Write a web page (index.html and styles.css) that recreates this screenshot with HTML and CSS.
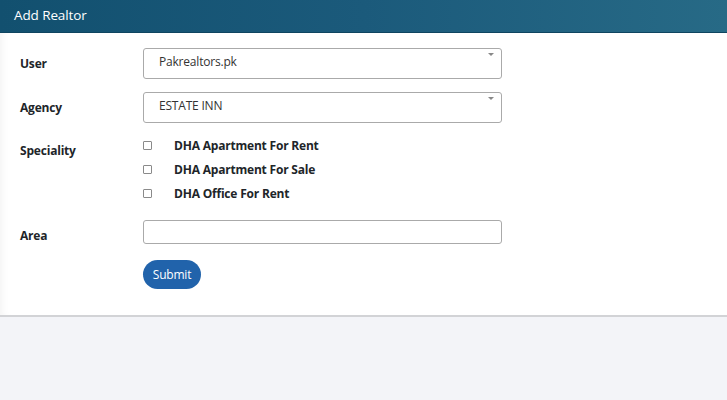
FILE: index.html
```html
<!DOCTYPE html>
<html>
<head>
<meta charset="utf-8">
<link rel="stylesheet" href="styles.css">
</head>
<body>
<div class="header">Add Realtor</div>
<div class="card">
  <form class="form">
    <div class="row row-select">
      <label class="label">User</label>
      <div class="select"><span>Pakrealtors.pk</span><span class="arrow"></span></div>
    </div>
    <div class="row row-select">
      <label class="label">Agency</label>
      <div class="select"><span>ESTATE INN</span><span class="arrow"></span></div>
    </div>
    <div class="row row-check">
      <label class="label label-check">Speciality</label>
      <div class="checks">
        <div class="check"><span class="box"></span><span>DHA Apartment For Rent</span></div>
        <div class="check"><span class="box"></span><span>DHA Apartment For Sale</span></div>
        <div class="check"><span class="box"></span><span>DHA Office For Rent</span></div>
      </div>
    </div>
    <div class="row row-area">
      <label class="label label-area">Area</label>
      <div class="input"></div>
    </div>
    <div class="row row-submit">
      <span></span>
      <div><button type="button" class="btn">Submit</button></div>
    </div>
  </form>
</div>
</body>
</html>
```
FILE: styles.css
```css
* { box-sizing: border-box; }
html, body { margin: 0; padding: 0; }
body {
  background: #f3f4f8;
  font-family: "Open Sans", "Noto Sans", sans-serif;
  color: #212529;
  width: 727px;
  height: 400px;
  overflow: hidden;
}
.header {
  height: 33px;
  background: linear-gradient(90deg, #12506f 0%, #1b5a7b 50%, #276a86 100%);
  border-bottom: 1px solid #0f4560;
  color: #fff;
  font-size: 13.5px;
  padding: 6px 14px 0;
  letter-spacing: -0.1px;
}
.card {
  background: #fff;
  height: 284px;
  border-bottom: 2px solid #d2d3d6;
  box-shadow: inset 8px 0 8px -6px rgba(0,0,0,0.05);
  padding: 15px 20px 0;
}
.form { display: flex; flex-direction: column; }
.row {
  display: grid;
  grid-template-columns: 123px 359px;
  align-items: center;
}
.label {
  font-weight: 700;
  font-size: 12px;
  letter-spacing: -0.2px;
}
.row-select { height: 31px; margin-bottom: 13px; }
.select {
  height: 31px;
  border: 1px solid #aaa;
  border-radius: 3px;
  display: flex;
  align-items: center;
  justify-content: space-between;
  padding: 0 7px 4px 15px;
  font-size: 12px;
  color: #333;
  letter-spacing: -0.2px;
  align-self: stretch;
}
.arrow {
  width: 0; height: 0;
  border-left: 3px solid transparent;
  border-right: 3px solid transparent;
  border-top: 3px solid #888;
  margin-bottom: 14px;
}
.row-check { align-items: start; margin-top: 0; }
.label-check { padding-top: 6px; }
.checks { display: flex; flex-direction: column; gap: 6px; }
.check {
  display: flex;
  align-items: center;
  height: 18px;
  font-weight: 700;
  font-size: 12px;
  letter-spacing: -0.2px;
}
.box {
  width: 9px; height: 9px;
  border: 1px solid #8a8a8a;
  border-radius: 1px;
  margin-right: 22px;
}
.row-area { margin-top: 18px; height: 24px; }
.label-area { padding-top: 6px; }
.input {
  height: 24px;
  border: 1px solid #aaa;
  border-radius: 3px;
}
.row-submit { margin-top: 16px; }
.btn {
  background: #2163ab;
  color: #fff;
  border: none;
  border-radius: 15px;
  height: 29px;
  width: 58px;
  font-family: inherit;
  font-size: 12px;
  padding: 0;
  letter-spacing: -0.2px;
}
```
